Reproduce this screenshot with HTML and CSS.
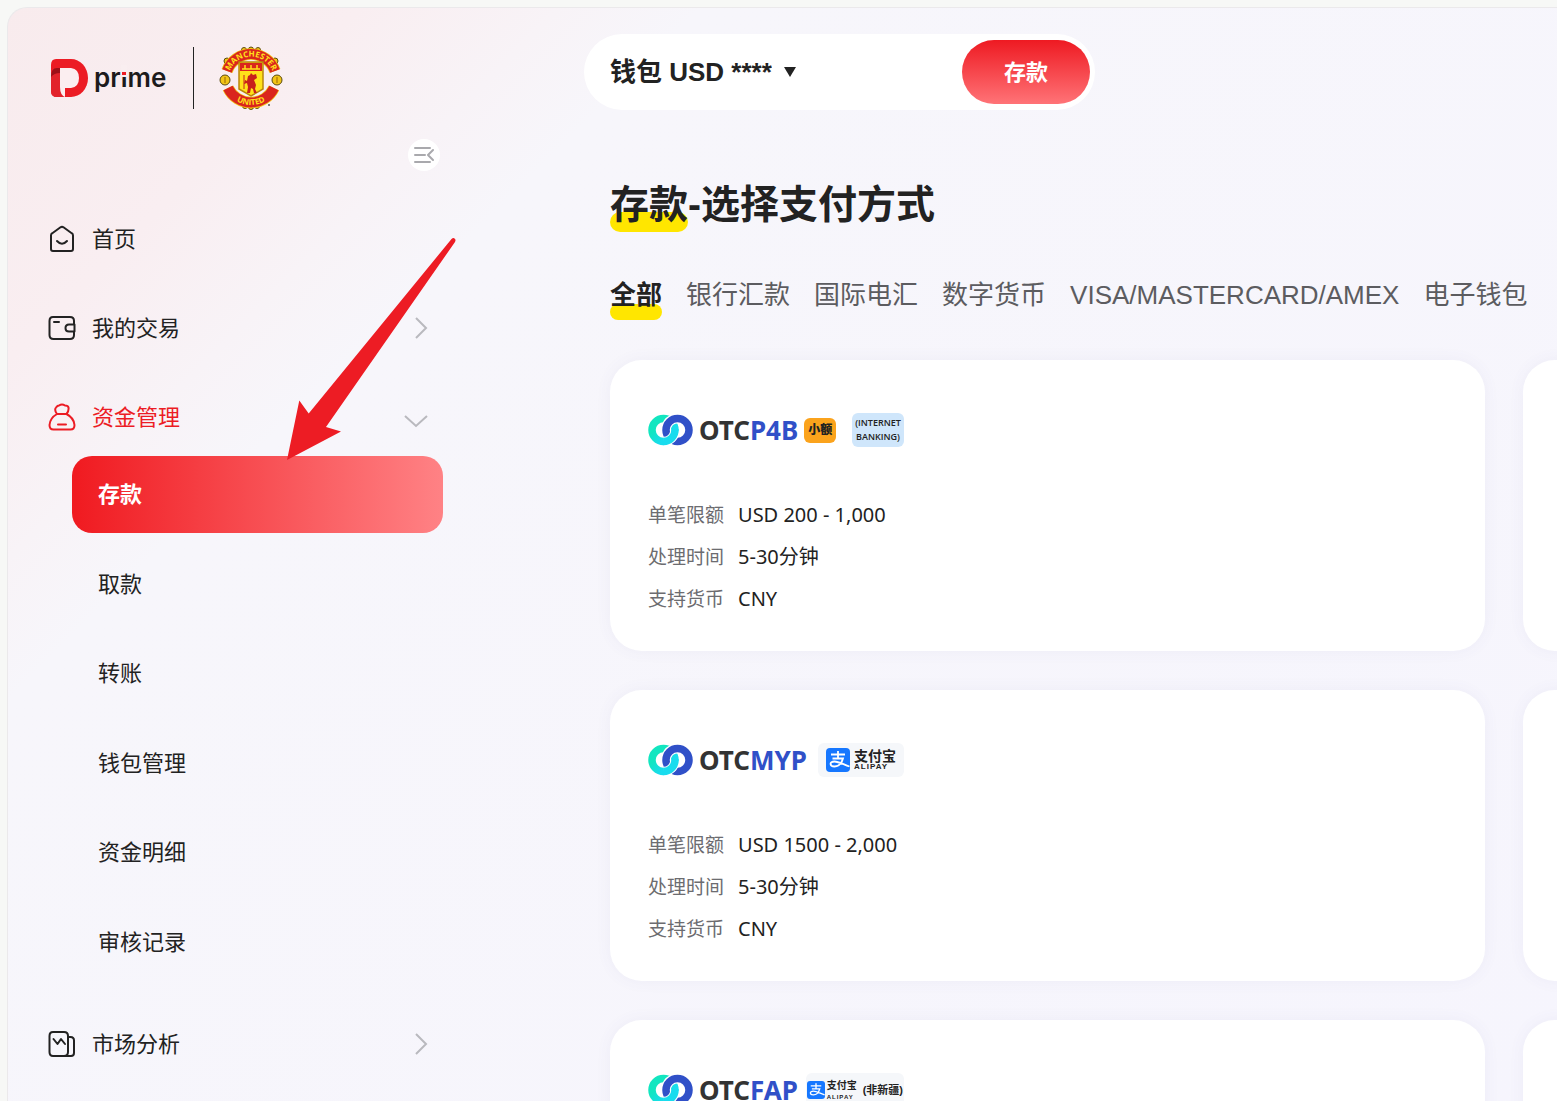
FILE: index.html
```html
<!DOCTYPE html>
<html lang="zh-CN">
<head>
  <meta charset="UTF-8">
  <meta name="viewport" content="width=device-width, initial-scale=1.0">
  <title>存款-选择支付方式</title>
  <link rel="stylesheet" href="styles.css">
</head>
<body>
  <svg class="defs" aria-hidden="true">
    <linearGradient id="aqua" x1="0" y1="0" x2="1" y2="1">
      <stop offset="0.300" stop-color="#12e6c0"/>
      <stop offset="0.700" stop-color="#18dcee"/>
    </linearGradient>
    <symbol id="otc" viewBox="0 0 45 32">
      <circle cx="15.500" cy="16" r="11.500" fill="none" stroke="url(#aqua)" stroke-width="7.500"/>
      <path d="M19 21a11.500 11.500 0 1 1 10.500 6.500" fill="none" stroke="#fff" stroke-width="10"/>
      <circle cx="29.500" cy="16" r="11.500" fill="none" stroke="#3050c8" stroke-width="7.500"/>
      <path d="M27 16.500a11.500 11.500 0 0 1-11.500 11" fill="none" stroke="#fff" stroke-width="9.500"/>
      <path d="M27 15.500a11.500 11.500 0 0 1-12 12" fill="none" stroke="#18dcee" stroke-width="7.500"/>
    </symbol>
    <symbol id="alipay" viewBox="0 0 24 24">
      <rect width="24" height="24" rx="4" fill="#1677ff"/>
      <path d="M5 6.500h14M12 3v7M6.500 10.500h10.500c-1.500 5-5 8-8.500 8-5 0-5.500-5 0-5 4 0 9 3 15 5" fill="none" stroke="#fff" stroke-width="1.800"/>
    </symbol>
    <symbol id="right" viewBox="0 0 14 24">
      <path d="M2 2l10 10L2 22" fill="none" stroke="#b9b9be" stroke-width="2"/>
    </symbol>
  </svg>

  <div class="shell">
    <aside class="sidebar">
      <div class="brand">
        <svg class="brand-logo" viewBox="0 0 118 40" role="img" aria-label="D prime">
          <path d="M6 1h15a17 19 0 0 1 0 38H7q-6 0-6-6V7q0-6 5-6z" fill="#ec1c24"/>
          <path d="M1 15Q1 10 7 10h3v18Q10 36 16 39H7q-6 0-6-6z" fill="#e2232b"/>
          <path d="M1 19Q1 10 7 10h3v5Q4 15 1 19z" fill="#9c1018"/>
          <path d="M10 10h11q8 1 8 10t-8 10h-6v9q-5-2-5-10z" fill="#fbeef0"/>
          <text class="brand-text" x="44" y="29">prime</text>
          <path d="M71 7h6v12h-6z" fill="#f9eef0"/>
          <path d="M72 14h4v3h-4z" fill="#ec1c24"/>
        </svg>
        <span class="brand-line"></span>
        <svg class="crest" viewBox="0 0 64 64" role="img" aria-label="Manchester United">
          <g fill="#f2c416" stroke="#5a4a10" stroke-width="1">
            <circle cx="25" cy="4" r="2.500"/><circle cx="32" cy="3.500" r="2.500"/><circle cx="39" cy="4" r="2.500"/>
            <circle cx="8" cy="15" r="3"/><circle cx="56" cy="15" r="3"/>
            <circle cx="26" cy="60" r="2.500"/><circle cx="32" cy="61" r="2.500"/><circle cx="38" cy="60" r="2.500"/>
            <circle cx="6" cy="34" r="5"/><circle cx="58" cy="34" r="5"/>
          </g>
          <path d="M6 31v6M58 31v6" stroke="#b8860b" stroke-width="1.500"/>
          <path d="M8 25a25.500 25.500 0 0 1 48 0M9 42a25.500 25.500 0 0 0 46 0" fill="none" stroke="#f2c416" stroke-width="11.500"/>
          <path d="M8 25a25.500 25.500 0 0 1 48 0M9 42a25.500 25.500 0 0 0 46 0" fill="none" stroke="#da251d" stroke-width="10"/>
          <path d="M20 16h24v27l-12 7-12-7z" fill="#ffe11a" stroke="#b8860b" stroke-width="1.500"/>
          <path d="M21 17h22v8H21z" fill="#da251d"/>
          <path d="M23 23h18M26 19v4M32 19v4M38 19v4" stroke="#ffe11a" stroke-width="1.500"/>
          <path d="M29 30l2-1 1-2 2 2 3-1 1 4-3 2 2 5-1 4 2 4h-3l-1-4-2-1-1 5h-3l1-6-1-4-3 1 1-4 2 1z" fill="#c8201b"/>
          <path d="M25 29v14" stroke="#c8201b"/>
          <path id="arc-top" d="M9 33.600a23 23 0 0 1 46 0" fill="none"/>
          <path id="arc-bottom" d="M4 31a28 28 0 0 0 56 0" fill="none"/>
          <text class="crest-text"><textPath href="#arc-top" startOffset="50%" text-anchor="middle">MANCHESTER</textPath></text>
          <text class="crest-text"><textPath href="#arc-bottom" startOffset="50%" text-anchor="middle">UNITED</textPath></text>
          <circle cx="50" cy="59" r="1" fill="#555"/>
        </svg>
      </div>

      <button class="collapse" type="button" aria-label="收起菜单">
        <svg width="20" height="18" viewBox="0 0 20 18" fill="none" stroke="#a9a9ad" stroke-width="2" stroke-linecap="round" stroke-linejoin="round">
          <path d="M1 2h15M1 9h10M1 16h15M19 4l-5 5 5 5"/>
        </svg>
      </button>

      <nav>
        <ul class="menu">
          <li>
            <a class="menu-item" href="#">
              <svg class="menu-icon" viewBox="0 0 28 28"><path d="M3 10.500Q3 9 4.300 8.200L12.500 2.300q1.500-1 3 0L23.700 8.200Q25 9 25 10.500V24q0 2-2 2H5q-2 0-2-2zM9 16q5 5.500 10 0"/></svg>
              首页
            </a>
          </li>
          <li>
            <a class="menu-item" href="#">
              <svg class="menu-icon" viewBox="0 0 28 28"><path d="M26 10V7q0-4-4-4H5Q1.500 3 1.500 7v14q0 4 4 4H22q4 0 4-4v-3M6 8h5M26.500 10.500H21q-3.500 0-3.500 3.500t3.500 3.500h5.500z"/></svg>
              我的交易
              <svg class="chev"><use href="#right"/></svg>
            </a>
          </li>
          <li>
            <a class="menu-item open" href="#">
              <svg class="menu-icon" viewBox="0 0 28 28"><path d="M9 11Q6 7 8 4.500 9.500 2.500 11 2.500q3-2 6 0 3 0 3.500 2Q21 8 18.500 11zM9 11Q2 15 1.500 22q0 4.500 4 4.500h17q4 0 4-4.500Q26 15 18.500 11M10 21.500h8"/></svg>
              资金管理
              <svg class="chev-down" viewBox="0 0 24 14"><path d="M1 2l11 10L23 2" fill="none" stroke="#b9b9be" stroke-width="2"/></svg>
            </a>
            <ul class="submenu">
              <li><a class="active" href="#">存款</a></li>
              <li><a href="#">取款</a></li>
              <li><a href="#">转账</a></li>
              <li><a href="#">钱包管理</a></li>
              <li><a href="#">资金明细</a></li>
              <li><a href="#">审核记录</a></li>
            </ul>
          </li>
          <li>
            <a class="menu-item" href="#">
              <svg class="menu-icon" viewBox="0 0 28 28"><path d="M5 2h11q4 0 4 4v16q0 4-4 4H5q-3.500 0-3.500-4V6Q1.500 2 5 2zM20 7h2.500Q26 7 26 10.500V23q0 3-3 3h-7M5.500 9l4 5 3.500-5 4 5"/></svg>
              市场分析
              <svg class="chev"><use href="#right"/></svg>
            </a>
          </li>
        </ul>
      </nav>
    </aside>

    <main class="main">
      <div class="wallet">
        <label class="wallet-pick">
          <select aria-label="钱包">
            <option>钱包 USD ****</option>
          </select>
          <svg width="12" height="10" viewBox="0 0 12 10"><path d="M0 0h12L6 10z" fill="#222"/></svg>
        </label>
        <button class="deposit" type="button">存款</button>
      </div>

      <div class="content">
        <h1><span class="marked">存款</span>-选择支付方式</h1>

        <div class="tabs">
          <button class="tab marked active" type="button">全部</button>
          <button class="tab" type="button">银行汇款</button>
          <button class="tab" type="button">国际电汇</button>
          <button class="tab" type="button">数字货币</button>
          <button class="tab" type="button">VISA/MASTERCARD/AMEX</button>
          <button class="tab" type="button">电子钱包</button>
        </div>

        <div class="cards">
          <section class="card">
            <div class="pay-logo">
              <svg class="otc-mark"><use href="#otc"/></svg>
              <b class="otc-name">OTC<i>P4B</i></b>
              <span class="small-tag">小额</span>
              <span class="bank-tag">(INTERNET<br>BANKING)</span>
            </div>
            <dl>
              <div><dt>单笔限额</dt><dd>USD 200 - 1,000</dd></div>
              <div><dt>处理时间</dt><dd>5-30分钟</dd></div>
              <div><dt>支持货币</dt><dd>CNY</dd></div>
            </dl>
          </section>
          <section class="card"></section>

          <section class="card">
            <div class="pay-logo">
              <svg class="otc-mark"><use href="#otc"/></svg>
              <b class="otc-name">OTC<i>MYP</i></b>
              <span class="ali-tag">
                <svg><use href="#alipay"/></svg>
                <span class="ali-name">支付宝<small>ALIPAY</small></span>
              </span>
            </div>
            <dl>
              <div><dt>单笔限额</dt><dd>USD 1500 - 2,000</dd></div>
              <div><dt>处理时间</dt><dd>5-30分钟</dd></div>
              <div><dt>支持货币</dt><dd>CNY</dd></div>
            </dl>
          </section>
          <section class="card"></section>

          <section class="card">
            <div class="pay-logo">
              <svg class="otc-mark"><use href="#otc"/></svg>
              <b class="otc-name">OTC<i>FAP</i></b>
              <span class="ali-tag compact">
                <svg><use href="#alipay"/></svg>
                <span class="ali-name">支付宝<small>ALIPAY</small></span>
                <span class="ali-note">(非新疆)</span>
              </span>
            </div>
          </section>
          <section class="card"></section>
        </div>
      </div>
    </main>

    <svg class="pointer" viewBox="0 0 170 224" aria-hidden="true">
      <path d="M0 223l12.300-59.500 9.400 13L164.500 2q2-2 3.500 0 1 1 0 3L39 190l15 4.500z" fill="#ed1c24"/>
    </svg>
  </div>
</body>
</html>
```
FILE: styles.css
```css
* { box-sizing: border-box; }
html {
  height: 100%;
  overflow: hidden;
}
body {
  margin: 0;
  padding: 7px 0 0 7px;
  height: 100%;
  overflow: hidden;
  background: #f7f8f6;
  color: #222;
  font-family: "Liberation Sans", "Noto Sans CJK SC", sans-serif;
  line-height: 1.5;
}
ul, dl, dd, h1 {
  margin: 0;
  padding: 0;
}
ul { list-style: none; }
a {
  color: inherit;
  text-decoration: none;
}
button, select {
  font: inherit;
  color: inherit;
  border: none;
  background: none;
  padding: 0;
  cursor: pointer;
}
.defs {
  position: absolute;
  width: 0;
  height: 0;
}
.shell {
  position: relative;
  display: grid;
  grid-template-columns: 435px minmax(0, 1fr);
  column-gap: 141px;
  height: 100%;
  overflow: hidden;
  border: 1px solid #ebe9eb;
  border-right: none;
  border-bottom: none;
  border-radius: 20px 0 0 0;
  background: linear-gradient(135deg, #f8ebed 0, #f9eef1 250px, #f8f3f7 390px, #f7f6fb 490px, #f6f5fd 100%);
}

/* sidebar */
.sidebar {
  display: flex;
  flex-direction: column;
  padding-top: 38px;
}
.brand {
  display: flex;
  align-items: center;
  height: 64px;
  padding-left: 42px;
}
.brand-logo {
  width: 118px;
  height: 40px;
}
.brand-text {
  font: 600 26px Inter, sans-serif;
  fill: #1d1b1c;
}
.brand-line {
  width: 1px;
  height: 62px;
  margin: 0 25px;
  background: #222;
}
.crest {
  width: 64px;
  height: 64px;
}
.crest-text {
  font: bold 8px "Open Sans", sans-serif;
  fill: #ffe11a;
}
.collapse {
  display: flex;
  align-items: center;
  justify-content: center;
  align-self: flex-end;
  width: 32px;
  height: 32px;
  margin: 29px 3px;
  border-radius: 50%;
  background: #fff;
}
.menu {
  display: flex;
  flex-direction: column;
  gap: 11px;
}
.menu-item {
  display: flex;
  align-items: center;
  gap: 16px;
  height: 78px;
  padding: 0 15px 0 40px;
  font-size: 22px;
}
.menu-item.open { color: #ec1c24; }
.menu-icon {
  width: 28px;
  height: 28px;
  fill: none;
  stroke: currentColor;
  stroke-width: 2;
  stroke-linecap: round;
  stroke-linejoin: round;
}
.chev {
  width: 14px;
  height: 24px;
  margin-left: auto;
}
.chev-down {
  width: 24px;
  height: 14px;
  margin: 8px 0 0 auto;
}
.submenu {
  display: flex;
  flex-direction: column;
  justify-content: space-between;
  height: 525px;
  margin-bottom: 13px;
  padding-left: 64px;
}
.submenu a {
  display: flex;
  align-items: center;
  height: 77px;
  padding-left: 26px;
  border-radius: 20px;
  font-size: 22px;
}
.submenu .active {
  background: linear-gradient(90deg, #f01a20, #ff8285);
  color: #fff;
  font-weight: bold;
}

/* main */
.main { padding-top: 26px; }
.wallet {
  display: flex;
  align-items: center;
  justify-content: space-between;
  max-width: 511px;
  height: 76px;
  padding: 0 5px 0 26px;
  border-radius: 38px;
  background: #fff;
}
.wallet-pick {
  display: flex;
  align-items: center;
  gap: 12px;
}
.wallet-pick select {
  appearance: none;
  font-size: 26px;
  font-weight: bold;
}
.deposit {
  width: 128px;
  height: 64px;
  border-radius: 32px;
  background: linear-gradient(#ee1a22, #ff7377);
  color: #fff;
  font-size: 22px;
  font-weight: bold;
}
.content { padding-left: 26px; }
.marked {
  position: relative;
  isolation: isolate;
}
.marked::before {
  content: "";
  position: absolute;
  z-index: -1;
  left: 0;
  right: 0;
  bottom: 0;
  height: 16px;
  border-radius: 8px;
  background: #ffe600;
}
h1 {
  margin-top: 68px;
  font-size: 39px;
  line-height: 54px;
}
h1 .marked { display: inline-block; }
h1 .marked::before {
  height: 20px;
  border-radius: 10px;
}
.tabs {
  display: flex;
  gap: 24px;
  margin: 38px 0 40px;
}
.tab {
  height: 50px;
  color: #5c5c60;
  font-size: 26px;
  white-space: nowrap;
}
.tab.active {
  color: #222;
  font-weight: bold;
}
.cards {
  display: grid;
  grid-template-columns: repeat(2, calc(100% - 72px));
  gap: 39px 38px;
}
.card {
  min-height: 291px;
  padding: 53px 38px 31px;
  border-radius: 32px;
  background: #fff;
  box-shadow: 0 0 16px rgba(90, 80, 160, 0.06);
}
.pay-logo {
  display: flex;
  align-items: center;
  width: 256px;
  height: 34px;
  margin-bottom: 47px;
}
.otc-mark {
  flex: none;
  width: 45px;
  height: 32px;
  margin-right: 6px;
}
.otc-name {
  color: #333;
  font: bold 26px "Noto Sans", sans-serif;
}
.otc-name i {
  color: #3050c8;
  font-style: normal;
}
.small-tag {
  margin-left: 6px;
  padding: 0 4px;
  border-radius: 6px;
  background: #fba31c;
  color: #222;
  font-size: 12px;
  font-weight: 900;
  line-height: 25px;
  white-space: nowrap;
}
.bank-tag {
  width: 52px;
  margin-left: auto;
  padding: 3px 0;
  border-radius: 6px;
  background: #cfe6fb;
  color: #222;
  font: 600 9px "Open Sans", sans-serif;
  line-height: 14px;
  text-align: center;
}
.ali-tag {
  display: flex;
  align-items: center;
  gap: 4px;
  height: 34px;
  margin-left: auto;
  padding: 0 8px;
  border-radius: 6px;
  background: #f5f7fa;
  color: #222;
}
.ali-tag svg {
  width: 24px;
  height: 24px;
}
.ali-name {
  font-size: 14px;
  font-weight: bold;
  line-height: 14px;
  white-space: nowrap;
}
.ali-name small {
  display: block;
  font-size: 8px;
  line-height: 8px;
  letter-spacing: 1px;
}
.ali-tag.compact {
  gap: 2px;
  padding: 0 1px;
}
.ali-tag.compact svg {
  width: 18px;
  height: 18px;
}
.compact .ali-name { font-size: 10px; }
.compact .ali-name small { font-size: 6px; }
.ali-note {
  margin-left: 4px;
  font-size: 11px;
  font-weight: bold;
  white-space: nowrap;
}
.card dl {
  font-family: "Noto Sans", "Noto Sans CJK SC", sans-serif;
  line-height: 42px;
}
.card dl div {
  display: flex;
  align-items: baseline;
  gap: 14px;
  height: 42px;
}
.card dt {
  color: #6c6c70;
  font-size: 19px;
}
.card dd { font-size: 20px; }

/* arrow over the menu */
.pointer {
  position: absolute;
  left: 279px;
  top: 229px;
  width: 170px;
  height: 224px;
  pointer-events: none;
}
```
